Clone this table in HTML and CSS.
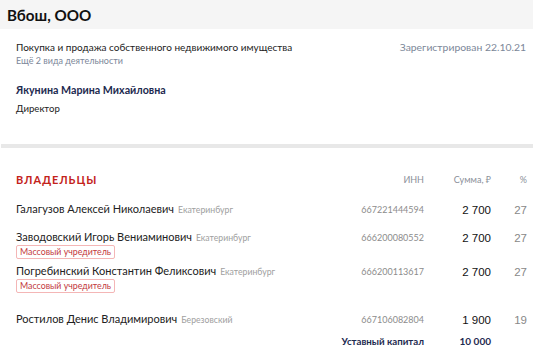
FILE: index.html
```html
<!DOCTYPE html>
<html lang="ru">
<head>
<meta charset="utf-8">
<link rel="stylesheet" href="styles.css">
</head>
<body>
<header class="top">
  <h1 class="title">Вбош, ООО</h1>
</header>
<section class="info">
  <div class="info-row">
    <div class="activity">
      <div class="activity-main">Покупка и продажа собственного недвижимого имущества</div>
      <div class="activity-more">Ещё 2 вида деятельности</div>
    </div>
    <div class="reg">Зарегистрирован 22.10.21</div>
  </div>
  <div class="person">Якунина Марина Михайловна</div>
  <div class="role">Директор</div>
</section>
<div class="divider"></div>
<section class="owners">
  <div class="grid head">
    <div class="sect-title">ВЛАДЕЛЬЦЫ</div>
    <div class="col-h">ИНН</div>
    <div class="col-h">Сумма, ₽</div>
    <div class="col-h">%</div>
  </div>
  <div class="grid row">
    <div class="who"><div class="who-line"><span class="name">Галагузов Алексей Николаевич</span><span class="city">Екатеринбург</span></div></div>
    <div class="inn">667221444594</div>
    <div class="sum">2 700</div>
    <div class="pct">27</div>
  </div>
  <div class="grid row row-tight">
    <div class="who"><div class="who-line"><span class="name">Заводовский Игорь Вениаминович</span><span class="city">Екатеринбург</span></div>
      <div class="badge-line"><span class="badge">Массовый учредитель</span></div>
    </div>
    <div class="inn">666200080552</div>
    <div class="sum">2 700</div>
    <div class="pct">27</div>
  </div>
  <div class="grid row row-loose">
    <div class="who"><div class="who-line"><span class="name">Погребинский Константин Феликсович</span><span class="city">Екатеринбург</span></div>
      <div class="badge-line"><span class="badge">Массовый учредитель</span></div>
    </div>
    <div class="inn">666200113617</div>
    <div class="sum">2 700</div>
    <div class="pct">27</div>
  </div>
  <div class="grid row row-last">
    <div class="who"><div class="who-line"><span class="name">Ростилов Денис Владимирович</span><span class="city">Березовский</span></div></div>
    <div class="inn">667106082804</div>
    <div class="sum">1 900</div>
    <div class="pct">19</div>
  </div>
  <div class="grid total">
    <div></div>
    <div class="total-label">Уставный капитал</div>
    <div class="total-sum">10 000</div>
    <div></div>
  </div>
</section>
</body>
</html>
```
FILE: styles.css
```css
* { box-sizing: border-box; }
html, body { margin: 0; padding: 0; background: #fff; }
body {
  font-family: Lato, "Noto Sans", sans-serif;
  color: #222;
  width: 533px;
}
.top {
  background: #f5f5f5;
  height: 29px;
  display: flex;
  align-items: center;
  padding-left: 7px;
}
.title {
  margin: 0;
  font-size: 15.2px;
  font-weight: 700;
  color: #111;
  line-height: 18px;
}
.info {
  padding: 11px 7px 0 16px;
  height: 115px;
}
.info-row {
  display: flex;
  justify-content: space-between;
}
.activity-main { font-size: 10px; line-height: 14px; color: #222; }
.activity-more { font-size: 9px; line-height: 14px; color: #7c8799; }
.reg { font-size: 10.4px; line-height: 14px; color: #7c8799; }
.person {
  margin-top: 14px;
  font-size: 10.7px;
  font-weight: 700;
  line-height: 16px;
  color: #1d2a4f;
}
.role {
  margin-top: 3px;
  font-size: 9.6px;
  line-height: 16px;
  color: #222;
}
.divider {
  height: 4px;
  background: #e8e8e8;
  margin-left: 1px;
}
.owners {
  padding: 25px 6px 0 16px;
}
.grid {
  display: grid;
  grid-template-columns: 1fr 90px 67px 36px;
  align-items: start;
}
.head { height: 29px; }
.sect-title {
  font-size: 11px;
  font-weight: 700;
  letter-spacing: 1px;
  color: #c3231b;
  line-height: 14px;
}
.col-h {
  text-align: right;
  font-size: 9px;
  color: #8a8f99;
  line-height: 14px;
}
.row { padding-bottom: 13px; }
.row-tight { padding-bottom: 5px; }
.row-loose { padding-bottom: 19px; }
.row-last { padding-bottom: 7px; }
.who-line {
  display: flex;
  align-items: baseline;
  gap: 4px;
  height: 14px;
}
.name { font-size: 11px; color: #222; line-height: 14px; }
.city { font-size: 8.7px; color: #a0a0a0; line-height: 14px; }
.inn, .sum, .pct { padding-top: 1px; }
.inn { text-align: right; font-size: 9px; color: #8c8c8c; line-height: 14px; }
.sum { text-align: right; font-family: "Liberation Sans", Arial, sans-serif; font-size: 11.5px; color: #111; line-height: 14px; }
.pct { text-align: right; font-family: "Liberation Sans", Arial, sans-serif; font-size: 11.5px; color: #888; line-height: 14px; }
.badge-line { margin-top: 1px; height: 14px; display: flex; }
.badge {
  border: 1px solid #f4b6b6;
  border-radius: 2px;
  padding: 0 3px;
  font-size: 8.8px;
  line-height: 12px;
  color: #c2383d;
}
.total { line-height: 14px; }
.total-label { text-align: right; font-size: 9.7px; font-weight: 700; color: #1d2a4f; white-space: nowrap; }
.total-sum { text-align: right; font-size: 10px; font-weight: 700; color: #1d2a4f; }
```
